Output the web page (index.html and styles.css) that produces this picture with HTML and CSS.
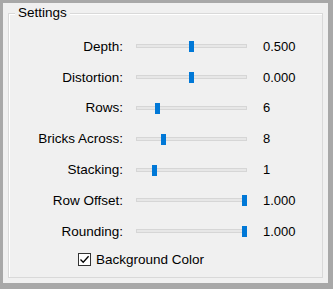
FILE: index.html
```html
<!DOCTYPE html>
<html lang="en">
<head>
    <meta charset="UTF-8">
    <title>Settings</title>
    <link rel="stylesheet" href="styles.css">
</head>
<body>
    <div class="frame">
        <div class="group">
            <span class="group-title">Settings</span>
            <div class="rows">
                <label>Depth:</label>
                <div class="track"><span class="thumb" style="left: 52px"></span></div>
                <span class="value">0.500</span>

                <label>Distortion:</label>
                <div class="track"><span class="thumb" style="left: 52px"></span></div>
                <span class="value">0.000</span>

                <label>Rows:</label>
                <div class="track"><span class="thumb" style="left: 18px"></span></div>
                <span class="value">6</span>

                <label>Bricks Across:</label>
                <div class="track"><span class="thumb" style="left: 24px"></span></div>
                <span class="value">8</span>

                <label>Stacking:</label>
                <div class="track"><span class="thumb" style="left: 15px"></span></div>
                <span class="value">1</span>

                <label>Row Offset:</label>
                <div class="track"><span class="thumb" style="left: 105px"></span></div>
                <span class="value">1.000</span>

                <label>Rounding:</label>
                <div class="track"><span class="thumb" style="left: 105px"></span></div>
                <span class="value">1.000</span>
            </div>
            <div class="check">
                <span class="box">
                    <svg width="11" height="11" viewBox="0 0 11 11"><path d="M1.5 5.5 L4.2 8.3 L9.6 2.2" fill="none" stroke="#000" stroke-width="1.3"/></svg>
                </span>
                <span>Background Color</span>
            </div>
        </div>
    </div>
</body>
</html>
```

FILE: styles.css
```css
body {
    margin: 0;
    font-family: "Liberation Sans", Arial, sans-serif;
    font-size: 13.5px;
    color: #000;
    background: #a8a8a8;
}
.frame {
    width: 325px;
    height: 280px;
    margin: 3px 0 0 3px;
    background: #f0f0f0;
    padding: 10px 0 0 5px;
    box-sizing: border-box;
}
.group {
    position: relative;
    width: 315px;
    height: 265px;
    box-sizing: border-box;
    border: 1px solid #d9d9d9;
    box-shadow: inset 1px 1px 0 #fff;
    padding: 17px 0 0 0;
}
.group-title {
    position: absolute;
    top: -9px;
    left: 6px;
    padding: 0 3px;
    background: #f0f0f0;
    line-height: 16px;
}
.rows {
    display: grid;
    grid-template-columns: 114px 111px auto;
    column-gap: 13px;
    grid-auto-rows: 30.8px;
    align-items: center;
}
.rows label {
    text-align: right;
}
.value {
    margin-left: 3px;
    font-size: 13px;
}
.track {
    position: relative;
    height: 4px;
    background: #e7e7e7;
    border: 1px solid #d6d6d6;
    box-sizing: border-box;
}
.thumb {
    position: absolute;
    top: -4px;
    width: 5px;
    height: 11px;
    background: #0078d7;
}
.check {
    display: flex;
    align-items: center;
    gap: 5px;
    margin: 0 0 0 69px;
    height: 26px;
}
.box {
    width: 13px;
    height: 13px;
    box-sizing: border-box;
    border: 1px solid #333;
    background: #fff;
    display: flex;
    align-items: center;
    justify-content: center;
}
```
